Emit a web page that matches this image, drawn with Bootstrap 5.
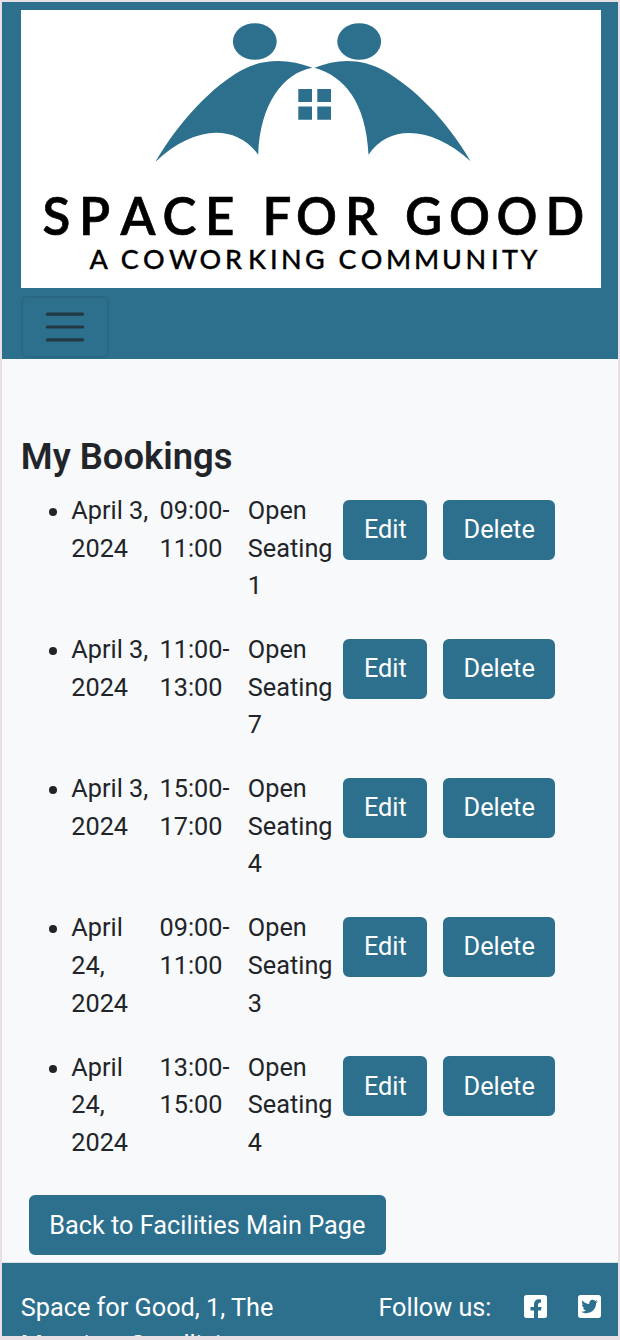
<!DOCTYPE html>
<html lang="en">
<head>
<meta charset="utf-8">
<meta name="viewport" content="width=device-width, initial-scale=1">
<title>My Bookings</title>
<link href="https://cdn.jsdelivr.net/npm/bootstrap@5.3.0/dist/css/bootstrap.min.css" rel="stylesheet">
<style>
:root{--brand:#2d708e}
html{font-size:25.06px}
body{font-family:Roboto,"Liberation Sans",sans-serif;font-size:25.25px;line-height:37.6px;background:#e9e0e5;height:1340px;overflow:hidden;padding:2px 2px 4px}
.page-frame{height:1334px;background:#f8f9fb;overflow:hidden}
.brand-bg{background:var(--brand)}
.site-nav{height:357px;padding:7.8px 17px 0 18.8px}
.site-logo{width:580px;height:278.3px;background:#fff}
.site-nav .navbar-toggler{margin-top:7.8px;border:2px solid rgba(0,0,0,.08);width:88px;height:62.5px;padding:0;display:flex;align-items:center;justify-content:center;--bs-navbar-toggler-border-radius:6px}
.site-nav .navbar-toggler-icon{width:48px;height:48px}
.main-area{padding:76px 17px 0 18.8px}
.page-title{font-size:36.4px;font-weight:600;line-height:1.2;margin-bottom:13.3px}
.booking-list{padding-left:50.5px}
.booking-item{height:139.15px}
.btn-brand{--bs-btn-color:#fff;--bs-btn-bg:var(--brand);--bs-btn-border-color:var(--brand);--bs-btn-hover-bg:#245a72;--bs-btn-hover-color:#fff;--bs-btn-border-width:2px;--bs-btn-border-radius:6px;--bs-btn-font-size:25.3px;--bs-btn-padding-y:9.2px;--bs-btn-padding-x:18.6px;line-height:37.6px;margin:7.8px}
.booking-item .btn-brand{margin-left:7.2px;margin-right:8.4px}
.site-footer{border-top:1px solid #dee2e6;padding:26px 17.5px 0 18.8px;height:110px;margin-top:-1.4px}
.follow-label{margin-right:32px}
.social-icons{display:grid;grid-template-columns:23px 23px;column-gap:31px;row-gap:15.6px;padding-top:6px}
</style>
</head>
<body>
<div class="page-frame">
  <nav class="navbar navbar-light brand-bg site-nav d-block">
    <svg class="site-logo d-block" viewBox="21 10 580 278" preserveAspectRatio="none" role="img">
      <g fill="#2d708e">
        <ellipse cx="254.8" cy="41.5" rx="21.9" ry="18.3"/>
        <ellipse cx="359.2" cy="41.5" rx="21.9" ry="18.3"/>
        <path d="M155.3 161.8C180 120 212 87 241 70.500C263 58 289 58.500 312.500 67.800C283 73 260 104 258.200 154.500C234 122 192 127 155.300 161.800Z"/>
        <path d="M470.500 161C446 119 413 87 384 70.500C361 58 337 58.500 314.500 67.800C344 76 366 102 368.500 154.500C391 122 434 128 470.500 161Z"/>
        <path d="M298.300 89H312V102H298.300ZM317.300 89H331V102H317.300ZM298.300 106.500H312V119.700H298.300ZM317.300 106.500H331V119.700H317.300Z"/>
      </g>
      <g font-family="Lato, sans-serif" fill="#000" stroke="#000">
        <text font-size="51" font-weight="600" stroke-width=".7" y="234.300" x="42.500 79 120.500 162.500 205 262.500 296 345 405 449 496.500 545.500">SPACEFORGOOD</text>
        <text font-size="27" font-weight="500" stroke-width=".3" y="269" x="89.500 120.700 143 169 199.500 225 248 270 281 305 338.500 360.700 386 414 442 465.500 491 502 520.500">ACOWORKINGCOMMUNITY</text>
      </g>
    </svg>
    <button class="navbar-toggler" type="button" aria-label="Toggle navigation"><span class="navbar-toggler-icon"></span></button>
  </nav>
  <main class="main-area">
    <h1 class="page-title">My Bookings</h1>
    <ul class="booking-list mb-0">
      <li class="booking-item"><div class="row g-0"><div class="col-2">April 3, 2024</div><div class="col-2">09:00-11:00</div><div class="col-2">Open Seating 1</div><div class="col-6 d-flex align-items-start"><a class="btn btn-brand">Edit</a><a class="btn btn-brand">Delete</a></div></div></li>
      <li class="booking-item"><div class="row g-0"><div class="col-2">April 3, 2024</div><div class="col-2">11:00-13:00</div><div class="col-2">Open Seating 7</div><div class="col-6 d-flex align-items-start"><a class="btn btn-brand">Edit</a><a class="btn btn-brand">Delete</a></div></div></li>
      <li class="booking-item"><div class="row g-0"><div class="col-2">April 3, 2024</div><div class="col-2">15:00-17:00</div><div class="col-2">Open Seating 4</div><div class="col-6 d-flex align-items-start"><a class="btn btn-brand">Edit</a><a class="btn btn-brand">Delete</a></div></div></li>
      <li class="booking-item"><div class="row g-0"><div class="col-2">April 24, 2024</div><div class="col-2">09:00-11:00</div><div class="col-2">Open Seating 3</div><div class="col-6 d-flex align-items-start"><a class="btn btn-brand">Edit</a><a class="btn btn-brand">Delete</a></div></div></li>
      <li class="booking-item"><div class="row g-0"><div class="col-2">April 24, 2024</div><div class="col-2">13:00-15:00</div><div class="col-2">Open Seating 4</div><div class="col-6 d-flex align-items-start"><a class="btn btn-brand">Edit</a><a class="btn btn-brand">Delete</a></div></div></li>
    </ul>
    <div class="d-flex"><a class="btn btn-brand">Back to Facilities Main Page</a></div>
  </main>
  <footer class="site-footer brand-bg text-white d-flex justify-content-between">
    <div>Space for Good, 1, The<br>Mansion, Goodlici</div>
    <div class="d-flex">
      <span class="follow-label">Follow us:</span>
      <div class="social-icons">
        <svg width="23" height="23" viewBox="0 0 23 23"><path fill="#fff" d="M2.500 0H20.500Q23 0 23 2.500V20.500Q23 23 20.500 23H14V15.500H17L17.600 12H14V10.500C14 8.400 14.800 7.600 17 7.600V4.400C12.500 3.500 10 5.500 10 9.500V12H6.500V15.500H10V23H2.500Q0 23 0 20.500V2.500Q0 0 2.500 0Z"/></svg>
        <svg width="23" height="23" viewBox="0 0 448 448"><path fill="#fff" d="M400 0H48C21.500 0 0 21.500 0 48v352c0 26.500 21.500 48 48 48h352c26.500 0 48-21.500 48-48V48c0-26.500-21.500-48-48-48zm-48.900 158.800c.2 2.800.2 5.700.2 8.500 0 86.700-66 186.600-186.600 186.600-37.200 0-71.700-10.800-100.700-29.400 5.300.6 10.400.8 15.800.8 30.700 0 58.900-10.400 81.400-28-28.800-.6-53-19.500-61.300-45.500 10.100 1.500 19.200 1.500 29.600-1.200-30-6.100-52.500-32.500-52.500-64.400v-.8c8.700 4.900 18.900 7.900 29.600 8.300a65.447 65.447 0 0 1-29.200-54.600c0-12.200 3.200-23.400 8.900-33.100 32.300 39.800 80.800 65.800 135.200 68.600-9.300-44.500 24-80.600 64-80.600 18.900 0 35.900 7.900 47.900 20.700 14.800-2.800 29-8.300 41.600-15.800-4.900 15.200-15.200 28-28.800 36.100 13.200-1.400 26-5.100 37.800-10.200-8.900 13.100-20.100 24.700-32.900 34z"/></svg>
        <svg width="23" height="23"><rect width="23" height="23" rx="2.500" fill="#fff"/></svg>
        <svg width="23" height="23"><rect width="23" height="23" rx="2.500" fill="#fff"/></svg>
      </div>
    </div>
  </footer>
</div>
<script src="https://cdn.jsdelivr.net/npm/bootstrap@5.3.0/dist/js/bootstrap.bundle.min.js"></script>
</body>
</html>
